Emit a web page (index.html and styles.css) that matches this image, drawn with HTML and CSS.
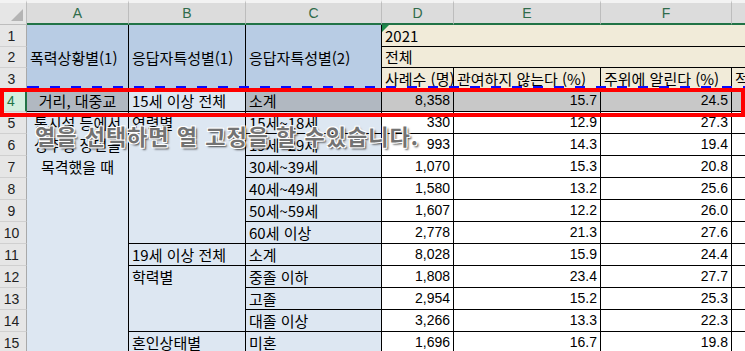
FILE: index.html
```html
<!DOCTYPE html>
<html lang="ko">
<head>
<meta charset="utf-8">
<link rel="stylesheet" href="styles.css">
</head>
<body>
<div class="wrap">
  <div class="sheet">
    <div class="corner"><span class="tri"></span></div>
    <div class="ch">A</div><div class="ch">B</div><div class="ch">C</div><div class="ch">D</div><div class="ch">E</div><div class="ch">F</div><div class="ch last">G</div>

    <div class="rn">1</div>
    <div class="c bl r3 mid">폭력상황별(1)</div>
    <div class="c bl r3 mid">응답자특성별(1)</div>
    <div class="c bl r3 mid">응답자특성별(2)</div>
    <div class="c be s4 flag">2021</div>

    <div class="rn">2</div>
    <div class="c be s4">전체</div>

    <div class="rn">3</div>
    <div class="c be">사례수 (명)</div>
    <div class="c be">관여하지 않는다 (%)</div>
    <div class="c be">주위에 알린다 (%)</div>
    <div class="c be last">적극 개입한다 (%)</div>

    <div class="rn on">4</div>
    <div class="c sel ctr">거리, 대중교</div>
    <div class="c lb">15세 이상 전체</div>
    <div class="c sel">소계</div>
    <div class="c selw n">8,358</div>
    <div class="c selw n">15.7</div>
    <div class="c selw n">24.5</div>
    <div class="c selw last"></div>

    <div class="rn">5</div>
    <div class="c lb r11 wrapcell">통시설 등에서<br>성추행 장면을<br>목격했을 때</div>
    <div class="c lb r6 top">연령별</div>
    <div class="c lb">15세~18세</div>
    <div class="c n">330</div><div class="c n">12.9</div><div class="c n">27.3</div><div class="c last"></div>

    <div class="rn">6</div>
    <div class="c lb">19세~29세</div>
    <div class="c n">993</div><div class="c n">14.3</div><div class="c n">19.4</div><div class="c last"></div>

    <div class="rn">7</div>
    <div class="c lb">30세~39세</div>
    <div class="c n">1,070</div><div class="c n">15.3</div><div class="c n">20.8</div><div class="c last"></div>

    <div class="rn">8</div>
    <div class="c lb">40세~49세</div>
    <div class="c n">1,580</div><div class="c n">13.2</div><div class="c n">25.6</div><div class="c last"></div>

    <div class="rn">9</div>
    <div class="c lb">50세~59세</div>
    <div class="c n">1,607</div><div class="c n">12.2</div><div class="c n">26.0</div><div class="c last"></div>

    <div class="rn">10</div>
    <div class="c lb">60세 이상</div>
    <div class="c n">2,778</div><div class="c n">21.3</div><div class="c n">27.6</div><div class="c last"></div>

    <div class="rn">11</div>
    <div class="c lb">19세 이상 전체</div>
    <div class="c lb">소계</div>
    <div class="c n">8,028</div><div class="c n">15.9</div><div class="c n">24.4</div><div class="c last"></div>

    <div class="rn">12</div>
    <div class="c lb r3 top">학력별</div>
    <div class="c lb">중졸 이하</div>
    <div class="c n">1,808</div><div class="c n">23.4</div><div class="c n">27.7</div><div class="c last"></div>

    <div class="rn">13</div>
    <div class="c lb">고졸</div>
    <div class="c n">2,954</div><div class="c n">15.2</div><div class="c n">25.3</div><div class="c last"></div>

    <div class="rn">14</div>
    <div class="c lb">대졸 이상</div>
    <div class="c n">3,266</div><div class="c n">13.3</div><div class="c n">22.3</div><div class="c last"></div>

    <div class="rn">15</div>
    <div class="c lb top">혼인상태별</div>
    <div class="c lb">미혼</div>
    <div class="c n">1,696</div><div class="c n">16.7</div><div class="c n">19.8</div><div class="c last"></div>
  </div>

  <div class="freeze"></div>
  <div class="redbox"></div>
  <div class="caption">열을 선택하면 열 고정을 할 수있습니다.</div>
</div>
</body>
</html>
```

FILE: styles.css
```css
* { box-sizing: border-box; }
html, body {
  margin: 0;
  padding: 0;
  width: 745px;
  height: 351px;
  overflow: hidden;
  background: #ffffff;
}
.wrap {
  position: relative;
  width: 745px;
  height: 351px;
  overflow: hidden;
}
.sheet {
  display: grid;
  grid-template-columns: 27px 102px 117px 136px 72px 147px 131px 200px;
  grid-template-rows: 25px 22px 21px 22px repeat(12, 22px);
  width: 932px;
  font-family: "Noto Sans CJK KR", "Liberation Sans", sans-serif;
  font-size: 15px;
  color: #000;
}
.corner {
  position: relative;
  background: #e6e6e6;
  border-right: 1px solid #bdbdbd;
  border-bottom: 1px solid #bdbdbd;
  border-top: 3px solid #f3f3f3;
}
.tri {
  position: absolute;
  right: 3px;
  bottom: 3px;
  width: 0;
  height: 0;
  border-left: 12px solid transparent;
  border-bottom: 12px solid #b4b4b4;
}
.ch {
  background: #dcdcdc;
  border-top: 3px solid #f3f3f3;
  border-right: 1px solid #bdbdbd;
  border-bottom: 2px solid #217346;
  color: #2f6b4a;
  font-family: "Liberation Sans", sans-serif;
  font-size: 14px;
  display: flex;
  align-items: center;
  justify-content: center;
}
.ch.last { border-right: none; justify-content: flex-start; padding-left: 90px; }
.rn {
  background: #e6e6e6;
  border-right: 1px solid #a9a9a9;
  border-bottom: 1px solid #d0d0d0;
  color: #222;
  font-family: "Liberation Sans", sans-serif;
  font-size: 14px;
  display: flex;
  align-items: center;
  justify-content: center;
  padding-right: 3px;
}
.rn.on {
  background: #d3efdf;
  color: #217346;
  border-right: 2px solid #217346;
}
.c {
  border-right: 1px solid #000;
  border-bottom: 1px solid #000;
  padding: 0 3px;
  line-height: 21px;
  white-space: nowrap;
  overflow: hidden;
  display: flex;
  align-items: flex-end;
}
.c.last { border-right: none; }
.bl { background: #b8cce4; }
.lb { background: #dde7f2; }
.be { background: #f1ebd9; }
.sel { background: #b1b8c1; }
.selw { background: #c8c8c8; }
.r3 { grid-row: span 3; }
.r6 { grid-row: span 6; }
.r11 { grid-row: span 11; border-bottom: none; }
.s4 { grid-column: span 4; border-right: none; }
.mid { align-items: center; }
.top { align-items: flex-start; }
.ctr { justify-content: center; }
.n {
  justify-content: flex-end;
  font-family: "Liberation Sans", sans-serif;
  font-size: 14px;
}
.wrapcell {
  display: block;
  text-align: center;
  line-height: 22px;
  white-space: normal;
  padding-top: 0;
}
.flag { position: relative; }
.flag::before {
  content: "";
  position: absolute;
  left: 0;
  top: 0;
  border-top: 7px solid #1e8a4a;
  border-right: 7px solid transparent;
}
.freeze {
  position: absolute;
  left: 27px;
  right: 0;
  top: 86px;
  height: 3px;
  background: repeating-linear-gradient(to right, #0a0aff 0 10px, transparent 10px 21px);
  background-position: 2px 0;
}
.redbox {
  position: absolute;
  left: 0;
  top: 88px;
  width: 745px;
  height: 29px;
  border: 4px solid #ff0000;
}
.caption {
  position: absolute;
  left: 35px;
  top: 119px;
  font-family: "Noto Sans CJK KR", sans-serif;
  font-size: 22px;
  font-weight: 700;
  letter-spacing: 1px;
  color: #737373;
  white-space: nowrap;
  text-shadow: -1px -1px 0 #fff, 1px -1px 0 #fff, -1px 1px 0 #fff, 1px 1px 0 #fff, 2px 2px 2px rgba(0,0,0,0.7);
}
```
